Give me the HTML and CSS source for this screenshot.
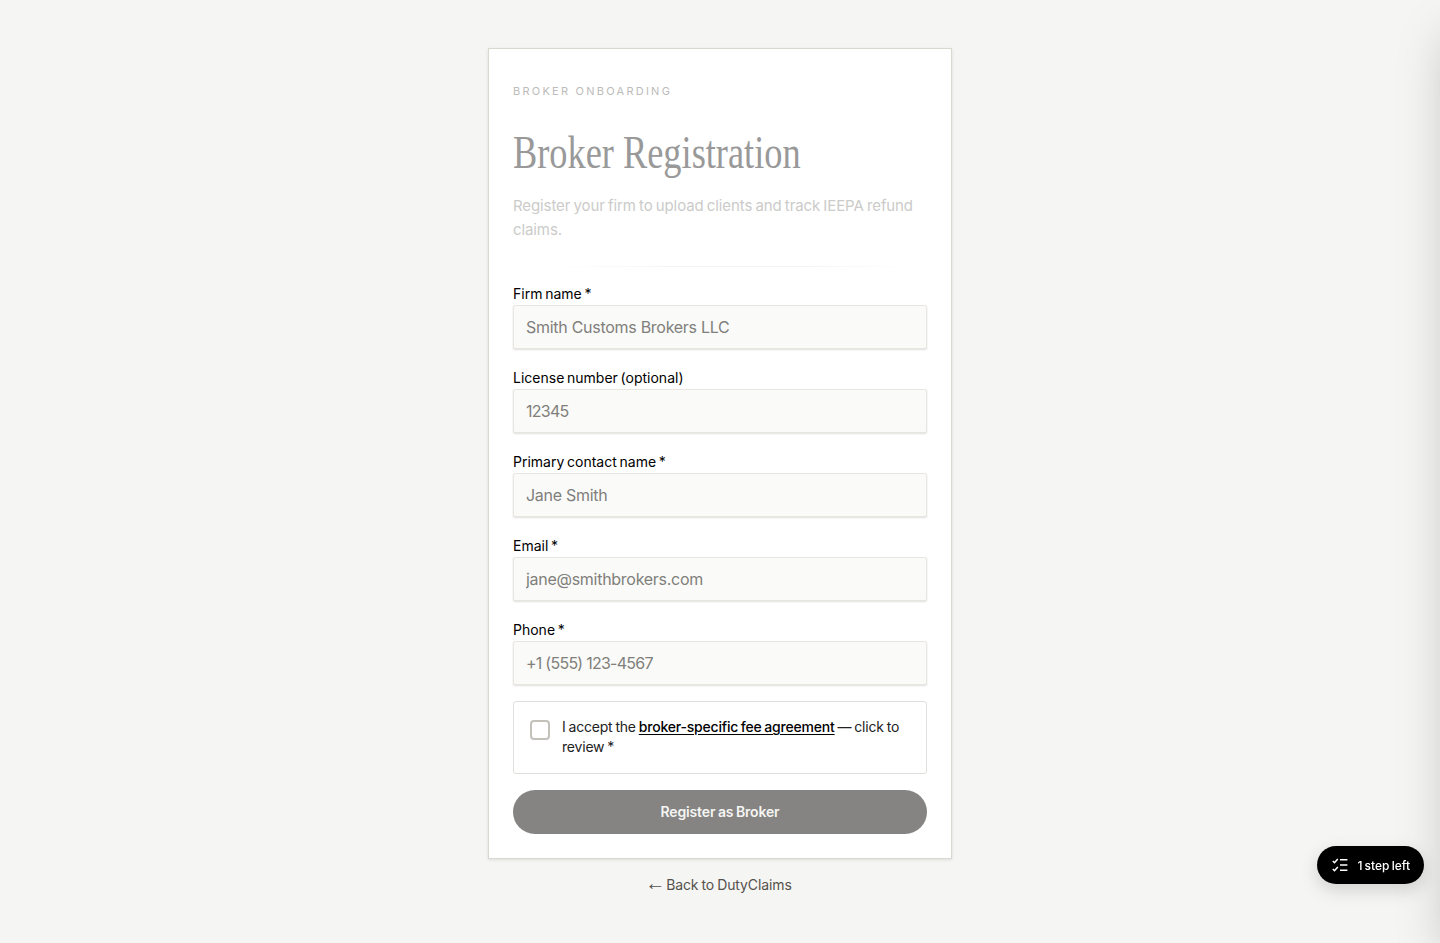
FILE: index.html
```html
<!DOCTYPE html>
<html lang="en">
<head>
  <meta charset="UTF-8">
  <title>Broker Registration</title>
  <link rel="stylesheet" href="styles.css">
</head>
<body>

  <main class="page">
    <form class="card">
      <p class="eyebrow">BROKER ONBOARDING</p>
      <h1 class="title">Broker Registration</h1>
      <p class="intro">Register your firm to upload clients and track IEEPA refund claims.</p>
      <div class="divider"></div>

      <div class="field">
        <label class="field-label">Firm name *</label>
        <input class="field-input" type="text" placeholder="Smith Customs Brokers LLC">
      </div>
      <div class="field">
        <label class="field-label">License number (optional)</label>
        <input class="field-input field-number" type="text" placeholder="12345">
      </div>
      <div class="field">
        <label class="field-label">Primary contact name *</label>
        <input class="field-input" type="text" placeholder="Jane Smith">
      </div>
      <div class="field">
        <label class="field-label">Email *</label>
        <input class="field-input" type="text" placeholder="jane@smithbrokers.com">
      </div>
      <div class="field">
        <label class="field-label">Phone *</label>
        <input class="field-input field-number" type="text" placeholder="+1 (555) 123-4567">
      </div>

      <div class="agreement">
        <span class="checkbox"></span>
        <p class="agreement-text">I accept the <a href="#" class="agreement-link">broker-specific fee agreement</a> — click to review *</p>
      </div>

      <button class="submit" type="button">Register as Broker</button>
    </form>

    <a href="#" class="back-link"><span class="back-arrow">←</span> Back to DutyClaims</a>
  </main>

  <button class="steps-pill" type="button">
    <svg class="steps-icon" width="16" height="16" viewBox="0 0 16 16" fill="none" stroke="currentColor" stroke-width="1.6">
      <path d="M0.8 4l1.7 1.7L5.8 2"/>
      <path d="M0.8 12l1.7 1.7L5.8 10"/>
      <path d="M8 2.7h7.4M8 8h7.4M8 13.2h7.4"/>
    </svg>
    <span>1 step left</span>
  </button>

  <div class="side-panel"></div>

</body>
</html>
```

FILE: styles.css
```css
* {
  box-sizing: border-box;
}

body {
  margin: 0;
  background: #f5f5f3;
  color: #000;
  font-family: Inter, "Liberation Sans", sans-serif;
  min-height: 100vh;
  overflow: hidden;
}

.page {
  display: flex;
  flex-direction: column;
  align-items: center;
  padding-top: 48px;
}

.card {
  width: 464px;
  background: #fff;
  border: 1px solid #d9d8ce;
  box-shadow: 0 1px 3px rgba(0, 0, 0, 0.1);
  padding: 32px 24px 24px;
}

.eyebrow {
  margin: 0;
  font-size: 11px;
  line-height: 20px;
  letter-spacing: 2.25px;
  color: #bcbcba;
}

.title {
  margin: 24px 0 0;
  font-family: "Liberation Serif", serif;
  font-weight: 400;
  font-size: 46px;
  line-height: 56px;
  color: #999;
  white-space: nowrap;
  transform: scaleX(0.79);
  transform-origin: left center;
}

.intro {
  margin: 13px 0 0;
  font-size: 15px;
  line-height: 24px;
  letter-spacing: -0.1px;
  word-spacing: -0.9px;
  color: #cbcbc9;
}

.divider {
  height: 1px;
  margin: 24px 0 14px;
  background: linear-gradient(to right, transparent 10%, #f4f4f2 40%, #f4f4f2 70%, transparent 95%);
}

.field {
  margin-bottom: 16px;
}

.field-label {
  display: block;
  height: 24px;
  font-size: 14px;
  line-height: 25px;
  letter-spacing: 0;
  word-spacing: -1.2px;
}

.field-input {
  display: block;
  width: 100%;
  height: 44px;
  padding: 0 12px;
  background: #fafaf8;
  border: 1px solid #e8e6df;
  border-radius: 2px;
  box-shadow: 0 1px 2px rgba(0, 0, 0, 0.13);
  font-family: inherit;
  font-size: 16px;
  letter-spacing: -0.28px;
  word-spacing: 0;
}

.field-number {
  letter-spacing: -0.75px;
}

.field-input::placeholder {
  color: #807f7b;
  opacity: 1;
}

.agreement {
  display: flex;
  gap: 12px;
  height: 73px;
  padding: 15px 16px;
  border: 1px solid #e0dfdb;
  border-radius: 3px;
}

.checkbox {
  flex: none;
  width: 20px;
  height: 20px;
  margin-top: 3px;
  border: 2px solid #c4c1bb;
  border-radius: 4px;
}

.agreement-text {
  margin: 0;
  font-size: 14px;
  line-height: 20px;
  letter-spacing: -0.2px;
  word-spacing: -0.8px;
  color: #222;
}

.agreement-link {
  color: #000;
  font-weight: 500;
  text-decoration: underline;
  text-underline-offset: 2px;
}

.submit {
  display: block;
  width: 100%;
  height: 44px;
  margin-top: 16px;
  padding: 0 0 2px;
  background: #858482;
  border: none;
  border-radius: 22px;
  color: #f5f5f3;
  font-family: inherit;
  font-size: 14px;
  font-weight: 600;
  letter-spacing: -0.15px;
  word-spacing: -0.8px;
}

.back-link {
  margin-top: 16px;
  height: 20px;
  font-size: 14px;
  line-height: 20px;
  letter-spacing: -0.1px;
  word-spacing: -0.8px;
  color: #55524d;
  text-decoration: none;
}

.back-arrow {
  display: inline-block;
  height: 14px;
  margin: 0 -2px 0 -3px;
  font-family: "Liberation Sans", sans-serif;
  font-size: 20px;
  line-height: 14px;
}

.steps-pill {
  position: fixed;
  right: 16px;
  bottom: 59px;
  display: flex;
  align-items: center;
  gap: 9px;
  height: 38px;
  padding: 0 14px 0 15px;
  background: #000;
  border: none;
  border-radius: 19px;
  box-shadow: 0 6px 18px rgba(0, 0, 0, 0.15);
  color: #fff;
  font-family: inherit;
  font-size: 12px;
  font-weight: 500;
  letter-spacing: 0;
  word-spacing: -1px;
}

.side-panel {
  position: fixed;
  top: 0;
  bottom: 0;
  left: 100%;
  width: 400px;
  box-shadow: 0 25px 50px -12px rgba(0, 0, 0, 0.25);
}
```
